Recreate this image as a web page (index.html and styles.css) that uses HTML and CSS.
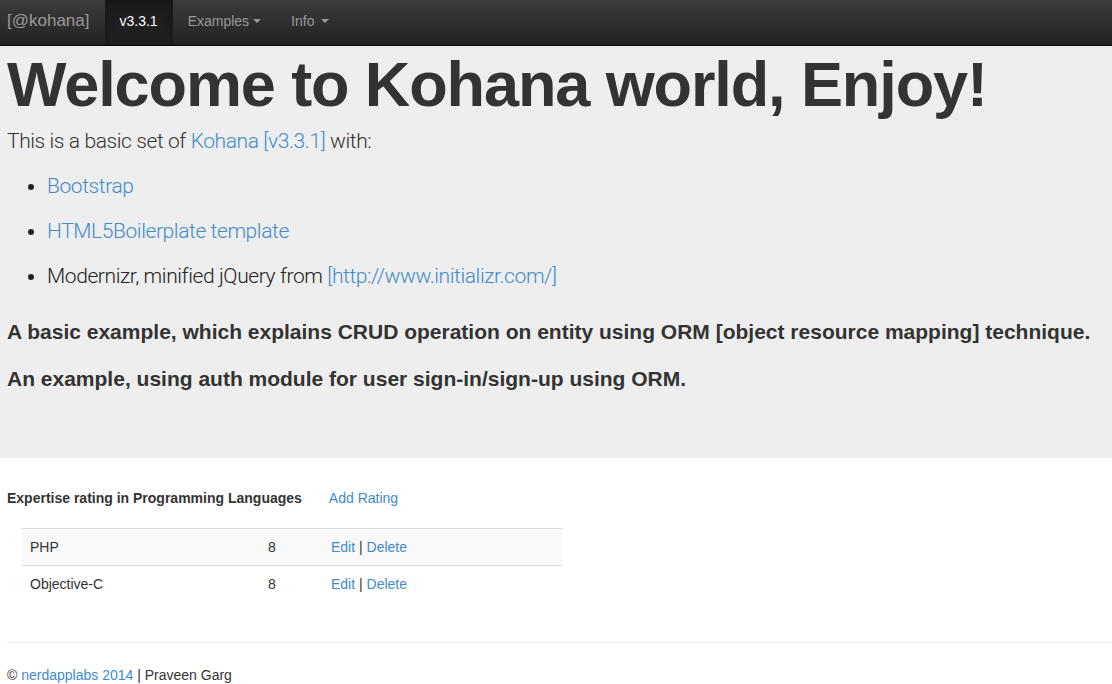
FILE: index.html
```html
<!DOCTYPE html>
<html lang="en">
<head>
<meta charset="utf-8">
<title>Kohana</title>
<link rel="stylesheet" href="styles.css">
</head>
<body>
<nav class="navbar">
  <a class="brand" href="#">[@kohana]</a>
  <ul class="nav">
    <li class="active"><a href="#">v3.3.1</a></li>
    <li><a href="#">Examples<span class="caret"></span></a></li>
    <li><a href="#">Info<span class="caret caret-wide"></span></a></li>
  </ul>
</nav>
<section class="jumbotron">
  <h1>Welcome to Kohana world, Enjoy!</h1>
  <p class="lead">This is a basic set of <a href="#">Kohana [v3.3.1]</a> with:</p>
  <ul class="features">
    <li><p class="lead"><a href="#">Bootstrap</a></p></li>
    <li><p class="lead"><a href="#">HTML5Boilerplate template</a></p></li>
    <li><p class="lead">Modernizr, minified jQuery from <a href="#">[http://www.initializr.com/]</a></p></li>
  </ul>
  <h4 class="example">A basic example, which explains CRUD operation on entity using ORM [object resource mapping] technique.</h4>
  <h4 class="example">An example, using auth module for user sign-in/sign-up using ORM.</h4>
</section>
<main class="content">
  <div class="rating-head">
    <strong>Expertise rating in Programming Languages</strong>
    <a href="#">Add Rating</a>
  </div>
  <table class="ratings">
    <tbody>
      <tr class="odd">
        <td class="lang">PHP</td>
        <td class="score">8</td>
        <td class="actions"><a href="#">Edit</a> | <a href="#">Delete</a></td>
      </tr>
      <tr>
        <td class="lang">Objective-C</td>
        <td class="score">8</td>
        <td class="actions"><a href="#">Edit</a> | <a href="#">Delete</a></td>
      </tr>
    </tbody>
  </table>
  <hr class="rule">
  <footer class="footer">© <a href="#">nerdapplabs 2014</a> | Praveen Garg</footer>
</main>
</body>
</html>
```
FILE: styles.css
```css
* { box-sizing: border-box; }
html, body { margin: 0; padding: 0; }
body {
  font-family: "Liberation Sans", Arial, sans-serif;
  font-size: 14px;
  line-height: 20px;
  color: #333;
  background: #fff;
}
a { color: #428bca; text-decoration: none; }

.navbar {
  display: flex;
  align-items: stretch;
  height: 46px;
  background: linear-gradient(to bottom, #3c3c3c 0%, #222 100%);
  border-bottom: 1px solid #080808;
}
.brand {
  display: flex;
  align-items: center;
  padding: 0 16px 3px 7px;
  font-size: 17px;
  color: #999;
}
.nav {
  display: flex;
  list-style: none;
  margin: 0;
  padding: 0;
}
.nav li a {
  display: flex;
  align-items: center;
  height: 100%;
  padding: 0 15px 3px;
  color: #999;
}
.nav li.active a {
  background: linear-gradient(to bottom, #1c1c1c 0%, #202020 100%);
  box-shadow: inset 0 3px 9px rgba(0,0,0,.25);
  color: #fff;
  padding: 0 15px 3px 14px;
}
.caret {
  display: inline-block;
  width: 0;
  height: 0;
  margin-left: 4px;
  border-top: 4px solid;
  border-left: 4px solid transparent;
  border-right: 4px solid transparent;
}
.caret-wide { margin-left: 7px; }

.jumbotron {
  background: #eee;
  padding: 1px 7px 47px;
}
.jumbotron h1 {
  font-size: 63px;
  line-height: 1.1;
  font-weight: 700;
  margin: 3px 0 7px;
  letter-spacing: -1.1px;
}
.lead {
  font-size: 21px;
  line-height: 30px;
  font-weight: 300;
  font-family: "Roboto", "Liberation Sans", sans-serif;
  letter-spacing: -0.4px;
  margin: 0 0 15px;
}
.features {
  margin: 2px 0 26px;
  padding-left: 40px;
}
.features li { font-size: 21px; color: #222; }
.example {
  font-size: 21px;
  line-height: 30px;
  font-weight: 700;
  margin: 0 0 17px;
}

.content { padding: 0 0 0 7px; }
.rating-head {
  display: flex;
  gap: 27px;
  margin-top: 30px;
}
.ratings {
  margin: 20px 0 40px 15px;
  width: 540px;
  border-collapse: collapse;
}
.ratings td {
  padding: 8px;
  border-top: 1px solid #ddd;
  vertical-align: top;
}
.ratings tr.odd td { background: #f9f9f9; }
.ratings td.lang { width: 238px; }
.ratings td.score { width: 63px; }
.rule {
  margin: 20px 0 22px;
  border: 0;
  border-top: 1px solid #eee;
}
.footer { margin-top: 0; }
```
